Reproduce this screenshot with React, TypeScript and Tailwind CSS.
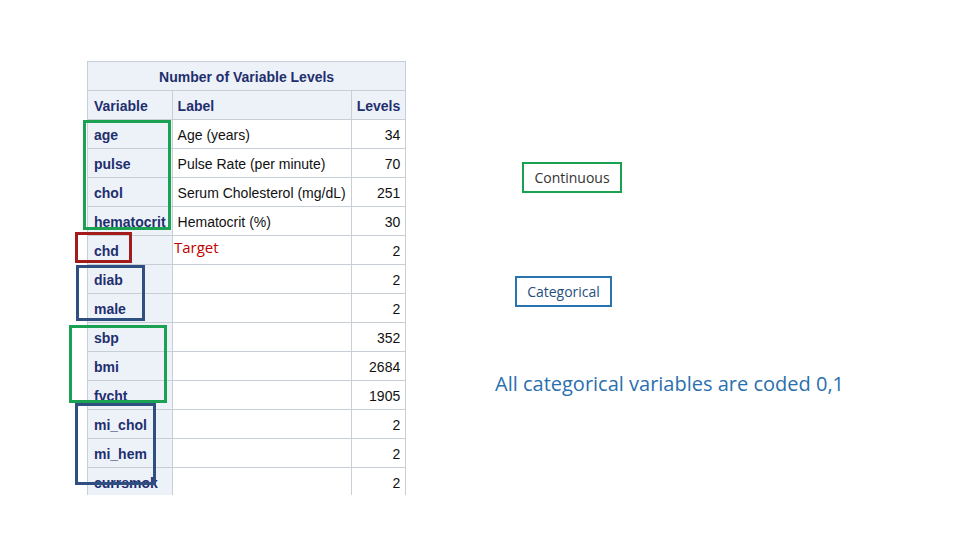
const rows: [string, string, string][] = [
  ["age", "Age (years)", "34"],
  ["pulse", "Pulse Rate (per minute)", "70"],
  ["chol", "Serum Cholesterol (mg/dL)", "251"],
  ["hematocrit", "Hematocrit (%)", "30"],
  ["chd", "", "2"],
  ["diab", "", "2"],
  ["male", "", "2"],
  ["sbp", "", "352"],
  ["bmi", "", "2684"],
  ["fvcht", "", "1905"],
  ["mi_chol", "", "2"],
  ["mi_hem", "", "2"],
  ["currsmok", "", "2"],
];

const cal = { fontFamily: '"Open Sans", Calibri, sans-serif' };

export default function App() {
  return (
    <div className="relative w-[960px] h-[540px] bg-white overflow-hidden flex" style={{ fontFamily: '"Liberation Sans", Arial, sans-serif' }}>
      <div className="pl-[87px] pt-[61px]">
        <div className="relative w-[319px] h-[434px]">
          <div className="w-[319px] h-[434px] overflow-hidden">
            <table className="border-collapse text-[14px] w-[319px]">
              <thead>
                <tr className="h-[29px]">
                  <th colSpan={3} className="border border-[#c8ced6] bg-[#edf2f9] text-[#1f2f6e] font-bold text-center pt-[2px]">Number of Variable Levels</th>
                </tr>
                <tr className="h-[29px]">
                  <th className="w-[85px] border border-[#c8ced6] bg-[#edf2f9] text-[#1f2f6e] font-bold text-left px-[6px] pt-[2px]">Variable</th>
                  <th className="w-[178px] border border-[#c8ced6] bg-[#edf2f9] text-[#1f2f6e] font-bold text-left px-[5px] pt-[2px]">Label</th>
                  <th className="w-[56px] border border-[#c8ced6] bg-[#edf2f9] text-[#1f2f6e] font-bold text-right px-[5px] pt-[2px]">Levels</th>
                </tr>
              </thead>
              <tbody>
                {rows.map(([v, l, n]) => (
                  <tr key={v} className="h-[29px]">
                    <td className="border border-[#c8ced6] bg-[#edf2f9] text-[#1f2f6e] font-bold px-[6px] pt-[2px] whitespace-nowrap overflow-hidden max-w-[85px]">{v}</td>
                    <td className="border border-[#c8ced6] text-[#111] px-[5px] pt-[2px] whitespace-nowrap">{l}</td>
                    <td className="border border-[#c8ced6] text-[#111] text-right px-[5px] pt-[2px]">{n}</td>
                  </tr>
                ))}
              </tbody>
            </table>
          </div>
          <div className="absolute left-[-4px] top-[59px] w-[88px] h-[110px] border-[3px] border-[#1aa152]" />
          <div className="absolute left-[-12px] top-[171px] w-[57px] h-[31px] border-[3px] border-[#a31c1c]" />
          <div className="absolute left-[-11px] top-[204px] w-[69px] h-[56px] border-[3px] border-[#2f4f80]" />
          <div className="absolute left-[-18px] top-[264px] w-[98px] h-[78px] border-[3px] border-[#1aa152]" />
          <div className="absolute left-[-12px] top-[342px] w-[81px] h-[82px] border-[3px] border-[#2f4f80]" />
          <div className="absolute left-[87px] top-[175px] text-[15px] text-[#c00000]" style={cal}>Target</div>
        </div>
      </div>
      <div className="flex flex-col items-start pl-[89px] pt-[162px]" style={cal}>
        <div className="ml-[27px] w-[100px] h-[31px] border-[2px] border-[#1aa152] flex items-center justify-center text-[14px] text-[#333]">Continuous</div>
        <div className="mt-[83px] ml-[20px] w-[97px] h-[31px] border-[2px] border-[#2874b0] flex items-center justify-center text-[14px] text-[#1f4f80]">Categorical</div>
        <div className="mt-[62px] text-[20px] text-[#2a6fae] whitespace-nowrap">All categorical variables are coded 0,1</div>
      </div>
    </div>
  );
}
